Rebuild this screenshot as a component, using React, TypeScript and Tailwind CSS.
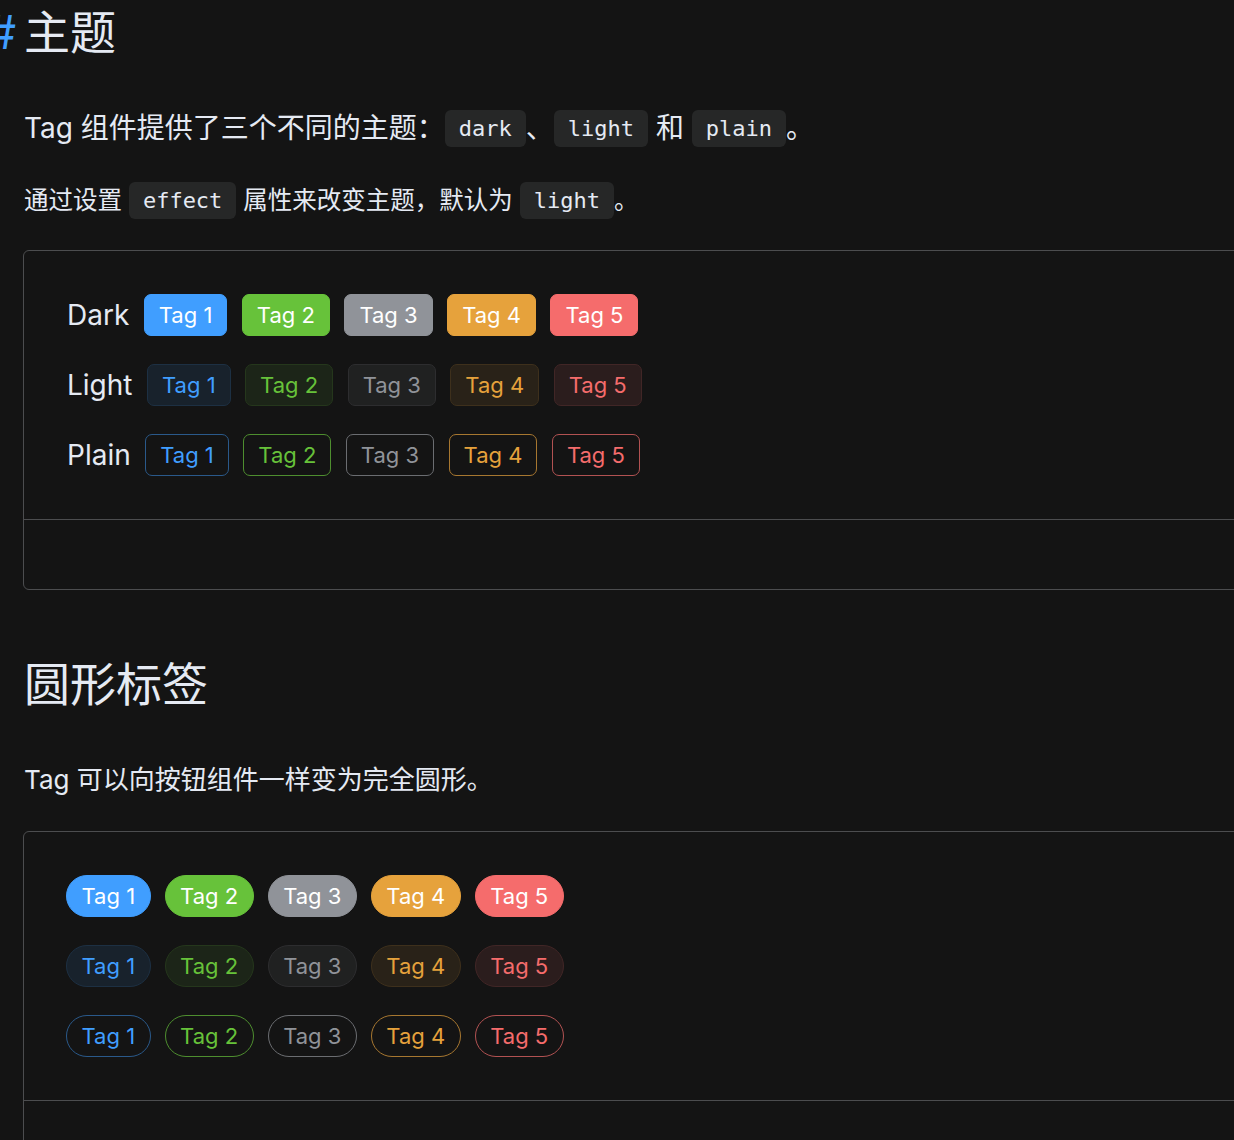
import { ReactNode } from "react";

type Variant = "dark" | "light" | "plain";

const tones = ["primary", "success", "info", "warning", "danger"] as const;
type Tone = (typeof tones)[number];

const styles: Record<Variant, Record<Tone, string>> = {
    dark: {
        primary: "bg-[#409eff] border-[#409eff] text-white",
        success: "bg-[#67c23a] border-[#67c23a] text-white",
        info: "bg-[#909399] border-[#909399] text-white",
        warning: "bg-[#e6a23c] border-[#e6a23c] text-white",
        danger: "bg-[#f56c6c] border-[#f56c6c] text-white",
    },
    light: {
        primary: "bg-[#18222c] border-[#1d3043] text-[#409eff]",
        success: "bg-[#1c2518] border-[#25371c] text-[#67c23a]",
        info: "bg-[#202121] border-[#2d2d2f] text-[#909399]",
        warning: "bg-[#292218] border-[#3e301c] text-[#e6a23c]",
        danger: "bg-[#2b1d1d] border-[#412626] text-[#f56c6c]",
    },
    plain: {
        primary: "bg-transparent border-[#2a598a] text-[#409eff]",
        success: "bg-transparent border-[#4e8e2f] text-[#67c23a]",
        info: "bg-transparent border-[#6b6d71] text-[#909399]",
        warning: "bg-transparent border-[#a77730] text-[#e6a23c]",
        danger: "bg-transparent border-[#b25252] text-[#f56c6c]",
    },
};

const Tag = ({ variant, tone, round, children }: { variant: Variant; tone: Tone; round?: boolean; children: ReactNode }) => (
    <span
        className={`inline-flex items-center h-[42px] border text-[22px] leading-none whitespace-nowrap ${round ? "rounded-full px-[14.5px]" : "rounded-[7px] px-[14px]"} ${styles[variant][tone]}`}
    >
        {children}
    </span>
);

const Code = ({ children }: { children: ReactNode }) => (
    <code className="inline-block align-middle bg-[#262727] rounded-[6px] px-[14px] h-[37px] leading-[37px] text-[22px] text-[#e5eaf3] font-['DejaVu_Sans_Mono',monospace] -mt-[4px]">
        {children}
    </code>
);

const TagRow = ({ variant, round }: { variant: Variant; round?: boolean }) => (
    <>
        {tones.map((tone, i) => (
            <Tag key={tone} variant={variant} tone={tone} round={round}>
                Tag {i + 1}
            </Tag>
        ))}
    </>
);

const App = () => {
    const font = "font-['Inter','Noto_Sans_CJK_SC',sans-serif]";
    return (
        <div className={`w-[1234px] h-[1140px] overflow-hidden bg-[#141414] text-[#e5eaf3] ${font}`}>
            <div className="w-[1400px] pl-[24px]">
                <h3 className="relative mt-[9px] h-[46px] leading-[46px] text-[46px] font-normal text-[#e5eaf3]">
                    <span className="absolute -left-[37px] top-0 text-[#409eff]">#</span>
                    主题
                </h3>

                <p className="mt-[53px] text-[28px] leading-[40px]">
                    Tag 组件提供了三个不同的主题：<Code>dark</Code>、<Code>light</Code> 和 <Code>plain</Code>。
                </p>
                <p className="mt-[32px] text-[24.5px] leading-[40px]">
                    通过设置 <Code>effect</Code> 属性来改变主题，默认为 <Code>light</Code>。
                </p>

                <div className="mt-[30px] -ml-px border border-[#4c4d4f] rounded-[6px]">
                    <div className="flex flex-col gap-[28px] px-[43px] pt-[43px] pb-[43px]">
                        {(["dark", "light", "plain"] as Variant[]).map((v) => (
                            <div key={v} className="flex items-center gap-[14.5px]">
                                <span className="text-[28px] leading-none">{v[0].toUpperCase() + v.slice(1)}</span>
                                <TagRow variant={v} />
                            </div>
                        ))}
                    </div>
                    <div className="border-t border-[#4c4d4f] h-[70px]" />
                </div>

                <h3 className="mt-[71px] h-[46px] leading-[46px] text-[46px] font-normal">圆形标签</h3>

                <p className="mt-[53px] text-[26px] leading-[40px]">Tag 可以向按钮组件一样变为完全圆形。</p>

                <div className="mt-[31px] -ml-px border border-[#4c4d4f] rounded-[6px]">
                    <div className="flex flex-col gap-[28px] px-[42px] pt-[43px] pb-[43px]">
                        {(["dark", "light", "plain"] as Variant[]).map((v) => (
                            <div key={v} className="flex items-center gap-[14px]">
                                <TagRow variant={v} round />
                            </div>
                        ))}
                    </div>
                    <div className="border-t border-[#4c4d4f] h-[70px]" />
                </div>
            </div>
        </div>
    );
};

export default App;
